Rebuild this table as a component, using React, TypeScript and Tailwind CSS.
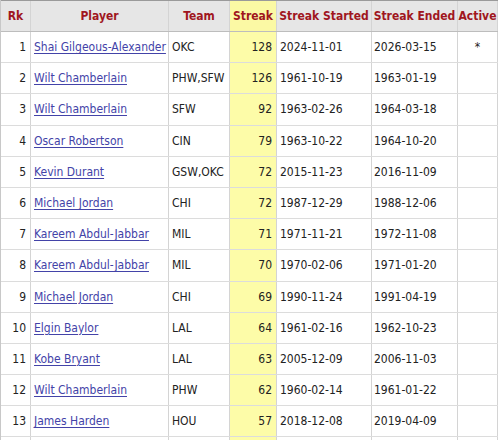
import React from 'react'

type Row = [number, string, string, number, string, string, string]

const rows: Row[] = [
    [1, 'Shai Gilgeous-Alexander', 'OKC', 128, '2024-11-01', '2026-03-15', '*'],
    [2, 'Wilt Chamberlain', 'PHW,SFW', 126, '1961-10-19', '1963-01-19', ''],
    [3, 'Wilt Chamberlain', 'SFW', 92, '1963-02-26', '1964-03-18', ''],
    [4, 'Oscar Robertson', 'CIN', 79, '1963-10-22', '1964-10-20', ''],
    [5, 'Kevin Durant', 'GSW,OKC', 72, '2015-11-23', '2016-11-09', ''],
    [6, 'Michael Jordan', 'CHI', 72, '1987-12-29', '1988-12-06', ''],
    [7, 'Kareem Abdul-Jabbar', 'MIL', 71, '1971-11-21', '1972-11-08', ''],
    [8, 'Kareem Abdul-Jabbar', 'MIL', 70, '1970-02-06', '1971-01-20', ''],
    [9, 'Michael Jordan', 'CHI', 69, '1990-11-24', '1991-04-19', ''],
    [10, 'Elgin Baylor', 'LAL', 64, '1961-02-16', '1962-10-23', ''],
    [11, 'Kobe Bryant', 'LAL', 63, '2005-12-09', '2006-11-03', ''],
    [12, 'Wilt Chamberlain', 'PHW', 62, '1960-02-14', '1961-01-22', ''],
    [13, 'James Harden', 'HOU', 57, '2018-12-08', '2019-04-09', ''],
    [14, '', '', 0, '', '', ''],
]

const cell = 'h-full flex items-center border-r border-[#d4d4d4] shrink-0'

export default function App() {
    return (
        <div className="w-[500px] h-[440px] overflow-hidden bg-white text-[12px] text-[#222] font-['DejaVu_Sans_Condensed','DejaVu_Sans',sans-serif]">
            <div className="w-[498px] border-l border-[#c8c8c8]">
                {/* header */}
                <div className="flex h-[32px] bg-[#e6e6e6] border-t border-b border-t-[#9a9a9a] border-b-[#bdbdbd] font-bold text-[#a0161e]">
                    <div className={`${cell} w-[30px] justify-center`}>Rk</div>
                    <div className={`${cell} w-[138px] justify-center`}>Player</div>
                    <div className={`${cell} w-[61px] justify-center`}>Team</div>
                    <div className={`${cell} w-[47px] justify-center bg-[#fbf9a4]`}>Streak</div>
                    <div className={`${cell} w-[95px] justify-center`}>Streak Started</div>
                    <div className={`${cell} w-[86px] justify-center`}>Streak Ended</div>
                    <div className={`${cell} w-[40px] justify-center`}>Active</div>
                </div>
                {rows.map((r) => (
                    <div key={r[0]} className="flex h-[31.2px] border-b border-[#dcdcdc]">
                        <div className={`${cell} w-[30px] justify-end pr-[4px]`}>{r[1] ? r[0] : ''}</div>
                        <div className={`${cell} w-[138px] pl-[3px]`}>
                            <a href="#" className="text-[#4343a8] underline underline-offset-2">{r[1]}</a>
                        </div>
                        <div className={`${cell} w-[61px] pl-[3px]`}>{r[2]}</div>
                        <div className={`${cell} w-[47px] justify-end pr-[4px] bg-[#fdfca8]`}>{r[3] || ''}</div>
                        <div className={`${cell} w-[95px] pl-[3px]`}>{r[4]}</div>
                        <div className={`${cell} w-[86px] pl-[2px]`}>{r[5]}</div>
                        <div className={`${cell} w-[40px] justify-center`}>{r[6]}</div>
                    </div>
                ))}
            </div>
        </div>
    )
}
